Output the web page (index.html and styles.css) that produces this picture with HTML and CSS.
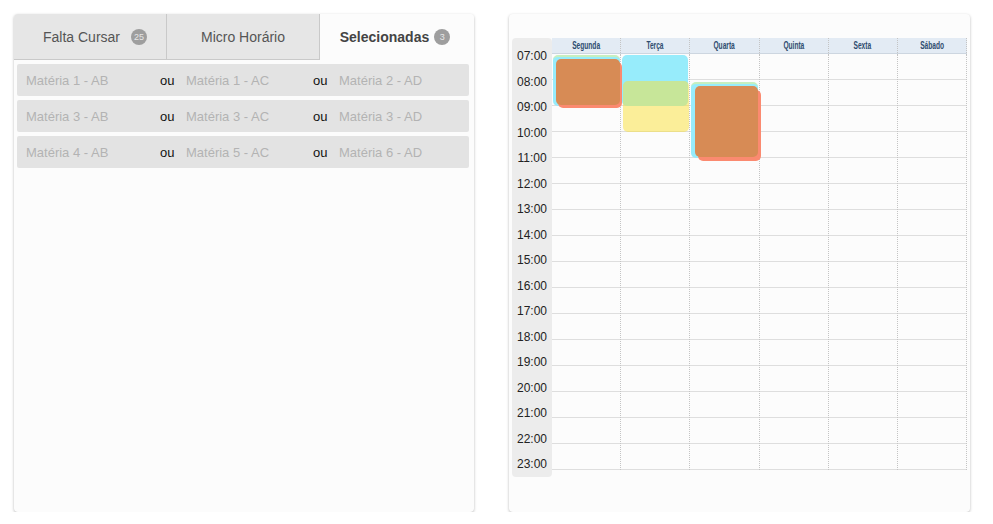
FILE: index.html
```html
<!DOCTYPE html>
<html lang="pt">
<head>
<meta charset="utf-8">
<title>Grade</title>
<link rel="stylesheet" href="styles.css">
</head>
<body>
<div class="page">
  <section class="panel left">
    <nav class="tabs">
      <div class="tab tab-1">Falta Cursar <span class="badge b-wide">25</span></div>
      <div class="tab tab-2">Micro Horário</div>
      <div class="tab tab-3 active">Selecionadas <span class="badge b-near">3</span></div>
    </nav>
    <div class="rows">
      <div class="row"><span class="m m1">Matéria 1 - AB</span><span class="ou">ou</span><span class="m m2">Matéria 1 - AC</span><span class="ou">ou</span><span class="m">Matéria 2 - AD</span></div>
      <div class="row"><span class="m m1">Matéria 3 - AB</span><span class="ou">ou</span><span class="m m2">Matéria 3 - AC</span><span class="ou">ou</span><span class="m">Matéria 3 - AD</span></div>
      <div class="row"><span class="m m1">Matéria 4 - AB</span><span class="ou">ou</span><span class="m m2">Matéria 5 - AC</span><span class="ou">ou</span><span class="m">Matéria 6 - AD</span></div>
    </div>
  </section>

  <section class="panel right">
    <div class="cal">
      <div class="times">
        <div class="t">07:00</div><div class="t">08:00</div><div class="t">09:00</div><div class="t">10:00</div>
        <div class="t">11:00</div><div class="t">12:00</div><div class="t">13:00</div><div class="t">14:00</div>
        <div class="t">15:00</div><div class="t">16:00</div><div class="t">17:00</div><div class="t">18:00</div>
        <div class="t">19:00</div><div class="t">20:00</div><div class="t">21:00</div><div class="t">22:00</div>
        <div class="t">23:00</div>
      </div>
      <div class="grid">
        <div class="head">
          <div class="day"><span>Segunda</span></div>
          <div class="day"><span>Terça</span></div>
          <div class="day"><span>Quarta</span></div>
          <div class="day"><span>Quinta</span></div>
          <div class="day"><span>Sexta</span></div>
          <div class="day"><span>Sábado</span></div>
        </div>
        <div class="body">
          <div class="col">
            <div class="ev cyan seg-c"></div>
            <div class="ev orange seg-o"></div>
          </div>
          <div class="col">
            <div class="ev cyan ter-c"></div>
            <div class="ev yellow ter-y"></div>
          </div>
          <div class="col">
            <div class="ev cyan qua-c"></div>
            <div class="ev orange qua-o"></div>
          </div>
          <div class="col"></div>
          <div class="col"></div>
          <div class="col"></div>
        </div>
      </div>
    </div>
  </section>
</div>
</body>
</html>
```

FILE: styles.css
```css
* { box-sizing: border-box; }
html, body { margin: 0; padding: 0; background: #ffffff; }
body { font-family: "Liberation Sans", Arial, sans-serif; }

.page {
  display: flex;
  padding: 14px 0 0 14px;
  gap: 35px;
}

.panel {
  background: #fcfcfc;
  border-radius: 4px;
  box-shadow: 0 1px 3px rgba(0,0,0,0.28);
  height: 498px;
}
.left { width: 460px; }
.right { width: 461px; }

/* tabs */
.tabs { display: flex; height: 46px; }
.tab {
  display: flex;
  align-items: center;
  justify-content: center;
  font-size: 14px;
  color: #555;
  background: #e6e6e6;
  border-bottom: 1px solid #c9c9c9;
}
.tab-1 { width: 153px; border-right: 1px solid #c9c9c9; border-top-left-radius: 4px; padding-left: 10px; }
.tab-2 { width: 153px; border-right: 1px solid #c9c9c9; }
.tab-3 { flex: 1; padding-right: 4px; }
.tab.active {
  background: #fcfcfc;
  border-bottom-color: transparent;
  font-weight: bold;
  color: #444;
  border-top-right-radius: 4px;
}
.badge {
  display: inline-flex;
  align-items: center;
  justify-content: center;
  width: 16px;
  height: 16px;
  border-radius: 50%;
  background: #9e9e9e;
  color: #e6e6e6;
  font-size: 9px;
  font-weight: normal;
}
.b-wide { margin-left: 11px; }
.b-near { margin-left: 5px; }

/* rows */
.rows {
  display: flex;
  flex-direction: column;
  gap: 4px;
  padding: 4px 5px 0 3px;
}
.row {
  display: flex;
  align-items: center;
  height: 32px;
  background: #e3e3e3;
  border-radius: 2px;
  padding-left: 9px;
  font-size: 13px;
}
.m { color: #b3b3b3; }
.m1 { width: 134px; }
.m2 { width: 127px; }
.ou { color: #111; width: 26px; }

/* calendar */
.cal {
  display: flex;
  padding: 24px 3px 0 3px;
}
.times {
  width: 40px;
  height: 439px;
  background: #ececec;
  border-radius: 4px;
  padding-top: 6px;
}
.t {
  height: 25.5px;
  line-height: 25.5px;
  font-size: 12px;
  color: #222;
  text-align: center;
}
.grid { flex: 1; }
.head {
  display: flex;
  height: 16px;
  background: #e3ebf4;
  border-bottom: 1px solid #cdd6e0;
}
.day {
  flex: 1;
  display: flex;
  align-items: center;
  justify-content: center;
  border-right: 1px dotted #c4c4c4;
}
.day span {
  display: inline-block;
  font-size: 10px;
  font-weight: bold;
  color: #2e4b6e;
  transform: scaleX(0.66);
}
.body {
  display: flex;
  height: 416px;
  background: repeating-linear-gradient(to bottom, transparent 0, transparent 25px, #dedede 25px, #dedede 26px);
}
.col {
  flex: 1;
  position: relative;
  border-right: 1px dotted #c4c4c4;
}

.ev { position: absolute; border-radius: 5px; }
.cyan { background: #97ecfb; }
.yellow { background: rgba(251, 224, 45, 0.48); }
.orange {
  background: #d78b55;
  box-shadow: 2px 3px 0 0 #fb8a70;
}

.seg-c { left: 1px; top: 1px; width: 67px; height: 51px; border-top: 2px solid #c6efc0; }
.seg-o { left: 4px; top: 5px; width: 64px; height: 46px; }

.ter-c { left: 1px; top: 1px; width: 66px; height: 51px; }
.ter-y { left: 2px; top: 27px; width: 66px; height: 51px; }

.qua-c { left: 1px; top: 28px; width: 67px; height: 76px; border-top: 2px solid #c6efc0; }
.qua-o { left: 5px; top: 32px; width: 63px; height: 71px; box-shadow: 3px 4px 0 0 #fb8a70; }
```
